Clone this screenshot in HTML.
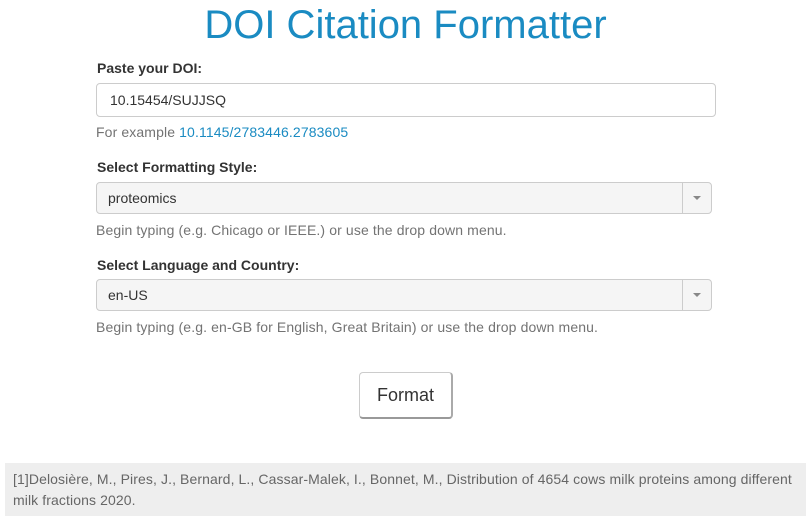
<!DOCTYPE html>
<html><head><style>
body{margin:0;background:#fff;font-family:"Liberation Sans",sans-serif;color:#333;width:811px;height:521px;position:relative;overflow:hidden}
.a{position:absolute}
h1{position:absolute;left:0;width:811px;top:3px;margin:0;text-align:center;font-weight:normal;font-size:40px;color:#1a8bc2}
.lbl{font-weight:bold;font-size:14px;left:97px}
.help{font-size:14px;color:#737373;left:96px;letter-spacing:0.12px}
.box{border:1px solid #ccc;border-radius:4px;box-sizing:border-box;font-size:14px;padding-left:13px}
.sel{background:#f5f5f5;left:96px;width:616px;height:32px;line-height:30px;padding-left:11px}
.sel .d{position:absolute;right:0;top:0;width:28px;height:30px;border-left:1px solid #ccc}
.sel .d:after{content:"";position:absolute;left:10px;top:13px;border:4px solid transparent;border-top:4px solid #888;border-bottom:0}
</style></head><body>
<h1>DOI Citation Formatter</h1>
<div class="a lbl" style="top:60px">Paste your DOI:</div>
<div class="a box" style="left:96px;top:83px;width:620px;height:34px;line-height:32px">10.15454/SUJJSQ</div>
<div class="a help" style="top:124px">For example <span style="color:#1a8bc2">10.1145/2783446.2783605</span></div>
<div class="a lbl" style="top:159px">Select Formatting Style:</div>
<div class="a box sel" style="top:182px">proteomics<div class="d"></div></div>
<div class="a help" style="top:222px">Begin typing (e.g. Chicago or IEEE.) or use the drop down menu.</div>
<div class="a lbl" style="top:257px">Select Language and Country:</div>
<div class="a box sel" style="top:279px">en-US<div class="d"></div></div>
<div class="a help" style="top:319px">Begin typing (e.g. en-GB for English, Great Britain) or use the drop down menu.</div>
<div class="a" style="left:359px;top:372px;width:94px;height:47px;box-sizing:border-box;border:1px solid #ccc;border-bottom:2px solid #999;border-right:2px solid #aaa;border-radius:4px;text-align:center;line-height:44px;font-size:18px;color:#333">Format</div>
<div class="a" style="left:5px;top:463px;width:801px;height:53px;background:#eee;font-size:14px;color:#666;line-height:21px;padding:6px 8px;box-sizing:border-box;letter-spacing:0.1px">[1]Delosière, M., Pires, J., Bernard, L., Cassar-Malek, I., Bonnet, M., Distribution of 4654 cows milk proteins among different milk fractions 2020.</div>
</body></html>
